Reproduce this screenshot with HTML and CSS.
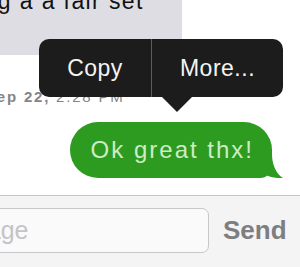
FILE: index.html
```html
<!DOCTYPE html>
<html lang="en">
  <head>
    <meta charset="UTF-8" />
    <meta name="viewport" content="width=device-width, initial-scale=1.0" />
    <title>Messages</title>
    <link rel="stylesheet" href="styles.css">
  </head>
  <body>
    <div class="thread">
      <div class="bubble-in">getting a a fair set</div>
      <div class="stamp"><b>Sep 22,</b> 2:28 PM</div>
      <div class="row-out">
        <div class="bubble-out">
          Ok great thx!
          <svg class="tail" width="24" height="24" viewBox="0 0 24 24">
            <path d="M0 0 H13 C13 10 17 20 24 24 C17 24.5 10 23 5 20 C3 22 1 23.5 0 24 Z" fill="#2c9b20" />
          </svg>
        </div>
      </div>

      <!-- callout menu over the bubble -->
      <div class="menu">
        <div class="menu-item copy">Copy</div>
        <div class="menu-item more">More...</div>
      </div>
    </div>

    <div class="composer">
      <input type="text" class="field" placeholder="Message" />
      <span class="send">Send</span>
    </div>
  </body>
</html>
```

FILE: styles.css
```css
html,
body {
  margin: 0;
  padding: 0;
  width: 300px;
  height: 267px;
  overflow: hidden;
  background-color: #fff;
  font-family: 'Liberation Sans', Arial, sans-serif;
}

.thread {
  height: 195px;
  position: relative;
  overflow: hidden;
}

.bubble-in {
  margin: -30px 0 0 -120px;
  width: 302px;
  height: 85px;
  box-sizing: border-box;
  padding: 18px 0 0 53px;
  background-color: #dedde3;
  border-radius: 18px;
  font-size: 23px;
  line-height: 27px;
  letter-spacing: 1.4px;
  color: #111;
  white-space: nowrap;
}

.stamp {
  margin: 33px 0 0 -15px;
  font-size: 15px;
  line-height: 18px;
  letter-spacing: 1.8px;
  color: #848488;
  white-space: nowrap;
}

.row-out {
  display: flex;
  justify-content: flex-end;
  margin-top: 16px;
  padding-right: 28px;
}

.bubble-out {
  position: relative;
  height: 56px;
  padding: 0 18px 0 21px;
  background-color: #2c9b20;
  border-radius: 28px 28px 12px 28px;
  color: #cdecc6;
  font-size: 24px;
  line-height: 56px;
  letter-spacing: 2px;
  white-space: nowrap;
}

.tail {
  position: absolute;
  right: -11px;
  bottom: 0;
  display: block;
}

.menu {
  position: absolute;
  left: 39px;
  top: 39px;
  width: 244px;
  height: 58px;
  display: flex;
  background-color: #1c1c1c;
  border-radius: 10px;
}

.menu::after {
  content: '';
  position: absolute;
  left: 123px;
  top: 58px;
  border-left: 15px solid transparent;
  border-right: 15px solid transparent;
  border-top: 15px solid #1c1c1c;
}

.menu-item {
  display: flex;
  align-items: center;
  justify-content: center;
  color: #f4f4f4;
  font-size: 23px;
  letter-spacing: 0.5px;
}

.copy {
  width: 112px;
  border-right: 1px solid #5c5c5c;
}

.more {
  flex: 1;
}

.composer {
  height: 72px;
  box-sizing: border-box;
  border-top: 1px solid #c4c4c6;
  background-color: #f4f4f4;
  display: flex;
  align-items: center;
  padding-bottom: 2px;
}

.field {
  margin: 0 0 0 -84px;
  width: 293px;
  height: 45px;
  box-sizing: border-box;
  padding: 0 0 0 10px;
  border: 1px solid #c8c8cc;
  border-radius: 7px;
  background-color: #fafafa;
  font-family: 'Liberation Sans', Arial, sans-serif;
  font-size: 25px;
  outline: none;
}

.field::placeholder {
  color: #c4c4c8;
}

.send {
  margin-left: 14px;
  font-size: 26px;
  font-weight: bold;
  color: #7e7e82;
}
```
